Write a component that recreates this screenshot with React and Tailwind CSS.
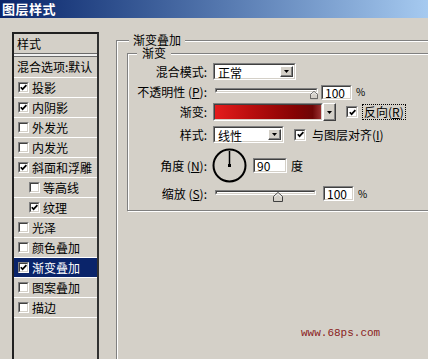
import React from 'react';

function Sunken({ className = '', inner = '', children }) {
  return (
    <div className={`border border-t-[#808080] border-l-[#808080] border-r-white border-b-white ${className}`}>
      <div className={`h-full w-full border border-t-[#404040] border-l-[#404040] border-r-[#d4d0c8] border-b-[#d4d0c8] ${inner}`}>
        {children}
      </div>
    </div>
  );
}

function Check({ checked, size = 'w-[12px] h-[12px]' }) {
  return (
    <Sunken className={`${size} shrink-0`} inner="bg-white flex items-center justify-center">
      {checked && (
        <svg width="7" height="7" viewBox="0 0 7 7">
          <path d="M0.8 3.2 L2.6 5.2 L6.4 1.2" stroke="#000" strokeWidth="1.7" fill="none" />
        </svg>
      )}
    </Sunken>
  );
}

function DropButton() {
  return (
    <div className="w-[13px] h-full shrink-0 bg-[#d4d0c8] border border-t-white border-l-white border-r-[#404040] border-b-[#404040] shadow-[inset_-1px_-1px_0_#808080] flex items-center justify-center">
      <svg width="5" height="3" viewBox="0 0 5 3">
        <path d="M0 0 H5 L2.5 3 Z" fill="#000" />
      </svg>
    </div>
  );
}

function Select({ value, width }) {
  return (
    <Sunken className={`${width} h-[17px]`} inner="bg-white flex items-stretch p-px">
      <span className="flex-1 pl-[2px] leading-[13px]">{value}</span>
      <DropButton />
    </Sunken>
  );
}

function NumInput({ value, width }) {
  return (
    <Sunken className={`${width} h-[15px]`} inner="bg-white pl-[2px] leading-[12px] text-[12px]">
      {value}
    </Sunken>
  );
}

function Thumb() {
  return (
    <svg width="10" height="10" viewBox="0 0 10 10">
      <path d="M0.5 4.5 L5 0.5 L9.5 4.5 V9.5 H0.5 Z" fill="#d4d0c8" stroke="#404040" />
      <path d="M1.5 4.8 L5 1.8 L8.5 4.8" stroke="#fff" fill="none" />
    </svg>
  );
}

function Slider({ width, pos }) {
  return (
    <div className={`${width} h-[12px] flex flex-col`}>
      <Sunken className="w-full h-[6px]" inner="bg-white" />
      <div className="flex -mt-[3px]" style={{ paddingLeft: pos }}>
        <Thumb />
      </div>
    </div>
  );
}

function Label({ children }) {
  return <div className="w-[80px] shrink-0 text-right pr-px">{children}</div>;
}

const items = [
  { label: '投影', checked: true },
  { label: '内阴影', checked: true },
  { label: '外发光' },
  { label: '内发光' },
  { label: '斜面和浮雕', checked: true },
  { label: '等高线', indent: true },
  { label: '纹理', checked: true, indent: true },
  { label: '光泽' },
  { label: '颜色叠加' },
  { label: '渐变叠加', checked: true, active: true },
  { label: '图案叠加' },
  { label: '描边' },
];

export default function App() {
  return (
    <div className="w-[428px] h-[359px] overflow-hidden bg-[#d4d0c8] font-['Noto_Sans_CJK_SC',sans-serif] text-[12px] leading-[14px] text-black">
      <div className="h-[18px] bg-gradient-to-r from-[#0a246a] to-[#a6caf0] flex items-center pl-[2px]">
        <span className="text-white font-bold text-[13px] leading-[16px] tracking-[0.5px]">图层样式</span>
      </div>

      <div className="flex items-start">
        <div className="ml-[12px] mt-[14px] w-[87px] h-[360px] shrink-0 border-2 border-[#202020] border-r-[#303030]">
          <div className="h-[19px] pl-[3px] flex items-center">样式</div>
          <div className="h-[4px] border-y border-[#6a6a6a] bg-[#f0f0f0]" />
          <div className="h-[21px] pl-[3px] flex items-center border-b border-white">混合选项:默认</div>
          {items.map((it) => (
            <div
              key={it.label}
              className={`h-[20px] flex items-center gap-[3px] border-b border-white ${it.indent ? 'pl-[15px]' : 'pl-[4px]'} ${it.active ? 'bg-[#0a246a] text-white' : ''}`}
            >
              <Check checked={it.checked} size="w-[11px] h-[11px]" />
              <span>{it.label}</span>
            </div>
          ))}
        </div>

        <fieldset className="ml-[17px] mt-[16px] w-[340px] h-[400px] shrink-0 border border-[#808080] shadow-[inset_1px_1px_0_#fff,1px_1px_0_#fff]">
          <legend className="ml-[12px] px-[4px] leading-[12px] bg-[#d4d0c8]">渐变叠加</legend>

          <fieldset className="ml-[10px] mt-[1px] w-[330px] border border-[#808080] shadow-[inset_1px_1px_0_#fff,1px_1px_0_#fff] pb-[9px]">
            <legend className="ml-[9px] px-[5px] leading-[12px] bg-[#d4d0c8]">渐变</legend>

            <div className="flex items-center h-[17px] mt-[4px]">
              <Label>混合模式:</Label>
              <div className="ml-[5px]">
                <Select value="正常" width="w-[83px]" />
              </div>
            </div>

            <div className="flex items-center h-[16px] mt-[4px]">
              <Label>
                不透明性 (<span className="underline">P</span>):
              </Label>
              <div className="ml-[7px] mt-[4px]">
                <Slider width="w-[103px]" pos="95px" />
              </div>
              <div className="ml-[3px]">
                <NumInput value="100" width="w-[31px]" />
              </div>
              <span className="ml-[4px] text-[10px]">%</span>
            </div>

            <div className="flex items-center h-[18px] mt-[3px]">
              <Label>渐变:</Label>
              <div className="ml-[5px] flex h-full">
                <Sunken className="w-[110px] h-full" inner="bg-[linear-gradient(to_right,#e41c1c,#b80d0d_35%,#860303_75%,#6e0606_92%,#9a3030)]" />
                <div className="w-[13px] h-full bg-[#d4d0c8] border border-t-white border-l-white border-r-[#404040] border-b-[#404040] shadow-[inset_-1px_-1px_0_#808080] flex items-center justify-center">
                  <svg width="5" height="3" viewBox="0 0 5 3">
                    <path d="M0 0 H5 L2.5 3 Z" fill="#000" />
                  </svg>
                </div>
              </div>
              <div className="ml-[10px]">
                <Check checked />
              </div>
              <span className="ml-[4px] px-[1px] border border-dotted border-black leading-[14px]">
                反向(<span className="underline">R</span>)
              </span>
            </div>

            <div className="flex items-center h-[17px] mt-[5px]">
              <Label>样式:</Label>
              <div className="ml-[5px]">
                <Select value="线性" width="w-[71px]" />
              </div>
              <div className="ml-[10px]">
                <Check checked />
              </div>
              <span className="ml-[6px]">
                与图层对齐(<span className="underline">I</span>)
              </span>
            </div>

            <div className="flex items-center h-[35px] mt-[5px]">
              <Label>
                角度 (<span className="underline">N</span>):
              </Label>
              <div className="ml-[4px]">
                <svg width="35" height="35" viewBox="0 0 35 35">
                  <circle cx="17.5" cy="17.5" r="16" stroke="#000" strokeWidth="2" fill="none" />
                  <line x1="17.5" y1="17.5" x2="17.5" y2="3" stroke="#000" strokeWidth="1.5" />
                  <rect x="16" y="16" width="3" height="3" fill="#000" />
                </svg>
              </div>
              <div className="ml-[6px]">
                <NumInput value="90" width="w-[34px]" />
              </div>
              <span className="ml-[4px]">度</span>
            </div>

            <div className="flex items-center h-[15px] mt-[3px]">
              <Label>
                缩放 (<span className="underline">S</span>):
              </Label>
              <div className="ml-[7px] mt-[4px]">
                <Slider width="w-[101px]" pos="58px" />
              </div>
              <div className="ml-[7px]">
                <NumInput value="100" width="w-[31px]" />
              </div>
              <span className="ml-[4px] text-[10px]">%</span>
            </div>
          </fieldset>

          <div className="mt-[116px] pl-[184px] font-['Liberation_Mono',monospace] text-[11px] leading-[12px] text-[#8a2222]">
            www.68ps.com
          </div>
        </fieldset>
      </div>
    </div>
  );
}
